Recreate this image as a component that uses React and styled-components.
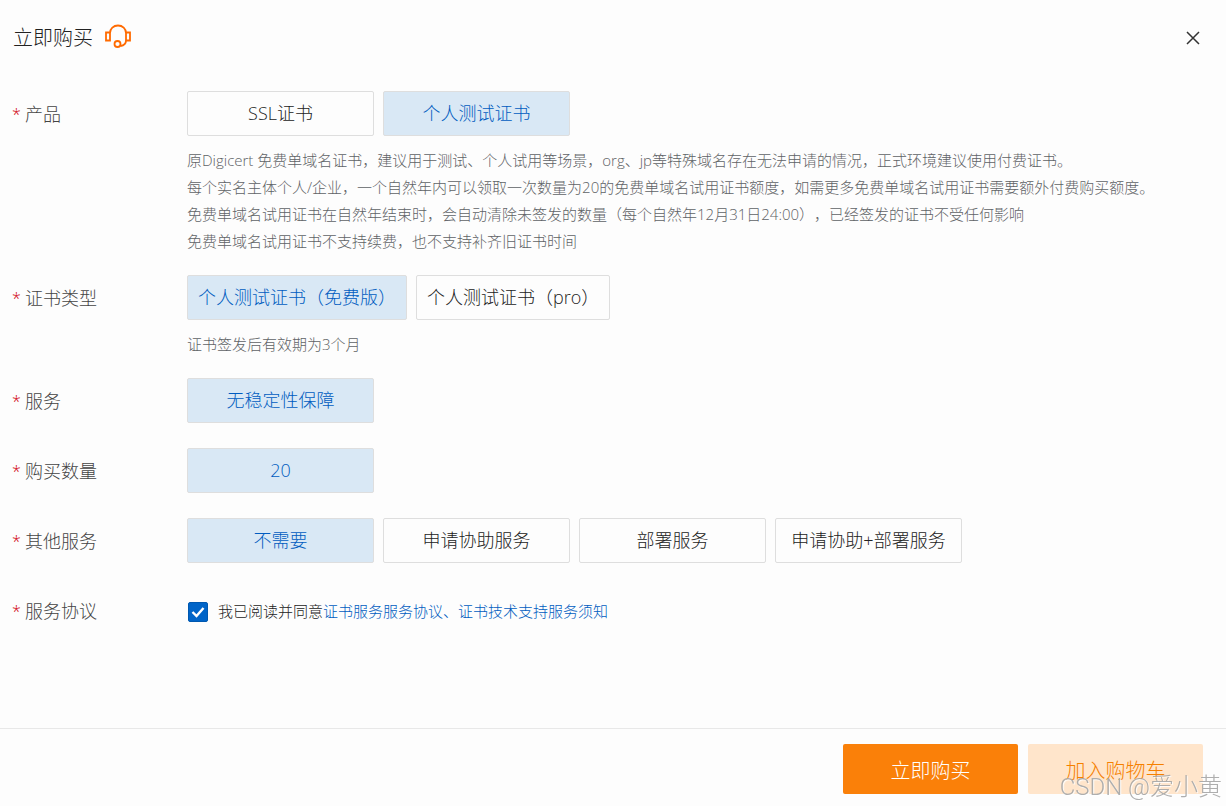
import { useState } from "react"
import styled, { createGlobalStyle } from "styled-components"

const groups = [
    {
        id: "produto",
        label: "产品",
        options: ["SSL证书", "个人测试证书"],
        initial: 1,
        notes: [
            "原Digicert 免费单域名证书，建议用于测试、个人试用等场景，org、jp等特殊域名存在无法申请的情况，正式环境建议使用付费证书。",
            "每个实名主体个人/企业，一个自然年内可以领取一次数量为20的免费单域名试用证书额度，如需更多免费单域名试用证书需要额外付费购买额度。",
            "免费单域名试用证书在自然年结束时，会自动清除未签发的数量（每个自然年12月31日24:00），已经签发的证书不受任何影响",
            "免费单域名试用证书不支持续费，也不支持补齐旧证书时间",
        ],
    },
    {
        id: "tipo",
        label: "证书类型",
        options: ["个人测试证书（免费版）", "个人测试证书（pro）"],
        initial: 0,
        notes: ["证书签发后有效期为3个月"],
    },
    { id: "servico", label: "服务", options: ["无稳定性保障"], initial: 0 },
    { id: "quantidade", label: "购买数量", options: ["20"], initial: 0 },
    {
        id: "outros",
        label: "其他服务",
        options: ["不需要", "申请协助服务", "部署服务", "申请协助+部署服务"],
        initial: 0,
    },
]

const OptionGroup = ({ id, label, options, initial, notes }) => {

    const [selected, setSelected] = useState(initial)

    return (

        <Row>

            <Label id={id}><Star>*</Star>{label}</Label>

            <Content>

                <Options role="group" aria-labelledby={id}>

                    {options.map((option, i) => (
                        <Option
                            key={option}
                            type="button"
                            $active={i === selected}
                            aria-pressed={i === selected}
                            onClick={() => setSelected(i)}
                        >
                            {option}
                        </Option>
                    ))}

                </Options>

                {notes && (
                    <Notes>
                        {notes.map((note) => <Note key={note}>{note}</Note>)}
                    </Notes>
                )}

            </Content>

        </Row>

    )

}

const App = () => {

    const [agreed, setAgreed] = useState(true)

    return (

        <Page>

            <GlobalStyle />

            <Header>

                <Title>立即购买</Title>

                <Headset viewBox="0 0 28 28" aria-hidden="true">
                    <path d="M6 9C6 4.500 9.500 1.500 14 1.500S22 4.500 22 9" />
                    <path d="M6 8.500H2V16.500H6ZM22 8.500H26V16.500H22Z" />
                    <path d="M22 16.500C22 19.500 20 21.500 16.500 22" />
                    <circle cx="13.500" cy="20" r="3" />
                </Headset>

                <Close type="button" aria-label="关闭">
                    <svg width="14" height="14" viewBox="0 0 14 14">
                        <path d="M1 1L13 13M13 1L1 13" stroke="#333" strokeWidth="1.500" />
                    </svg>
                </Close>

            </Header>

            <Form>

                {groups.map((group) => <OptionGroup key={group.id} {...group} />)}

                <Row>

                    <Label as="label" htmlFor="acordo"><Star>*</Star>服务协议</Label>

                    <Agreement>

                        <CheckWrap>
                            <Check
                                id="acordo"
                                type="checkbox"
                                checked={agreed}
                                onChange={(e) => setAgreed(e.target.checked)}
                            />
                            <Tick viewBox="0 0 20 20" aria-hidden="true">
                                <path d="M4.500 10L8.500 14L15.500 6" />
                            </Tick>
                        </CheckWrap>

                        <p>我已阅读并同意<A href="#">证书服务服务协议</A><A href="#">、证书技术支持服务须知</A></p>

                    </Agreement>

                </Row>

            </Form>

            <Footer>

                <Action type="button">立即购买</Action>

                <Action type="button" $light>加入购物车</Action>

            </Footer>

            <Watermark>CSDN @爱小黄</Watermark>

        </Page>

    )

}

const GlobalStyle = createGlobalStyle`
    * {
        box-sizing: border-box;
        margin: 0;
        padding: 0;
    }

    body {
        background: #fdfdfd;
        color: #222;
        font-family: "Open Sans", "Noto Sans CJK SC", sans-serif;
        font-weight: 300;
        text-spacing-trim: space-all;
    }

    button, input {
        font: inherit;
        cursor: pointer;
    }
`

const Page = styled.main`
    min-height: 100vh;
    display: flex;
    flex-direction: column;
`

const Header = styled.header`
    height: 75px;
    display: flex;
    align-items: center;
    gap: 11px;
    padding: 0 24px 0 13px;
`

const Title = styled.h1`
    font-size: 20px;
    font-weight: 300;
    line-height: 30px;
`

const Headset = styled.svg`
    width: 28px;
    height: 28px;
    fill: none;
    stroke: #ff6a00;
    stroke-width: 1.8;
`

const Close = styled.button`
    width: 18px;
    height: 18px;
    margin-left: auto;
    display: flex;
    align-items: center;
    justify-content: center;
    border: none;
    background: transparent;
`

const Form = styled.form`
    flex: 1;
    display: flex;
    flex-direction: column;
    gap: 24px;
    padding: 16px 24px 40px 12px;
`

const Row = styled.div`
    display: flex;
    align-items: flex-start;
`

const Label = styled.div`
    width: 175px;
    flex-shrink: 0;
    display: flex;
    padding-top: 1px;
    color: #444;
    font-size: 18px;
    line-height: 45px;
`

const Star = styled.span`
    width: 13px;
    color: #d0000c;
    font-size: 16px;
`

const Content = styled.div`
    flex: 1;
    min-width: 0;
`

const Options = styled.div`
    display: flex;
    flex-wrap: wrap;
    gap: 9px;
`

const Option = styled.button`
    min-width: 187px;
    height: 45px;
    padding: 0 10px;
    border: 1px solid #dedede;
    border-radius: 2px;
    background: ${({ $active }) => ($active ? "#d9e8f5" : "transparent")};
    color: ${({ $active }) => ($active ? "#005cc0" : "#222")};
    font-size: 18px;
    line-height: 27px;
`

const Notes = styled.div`
    margin: 11px 0 -4px;
`

const Note = styled.p`
    color: #5f6366;
    font-size: 15px;
    line-height: 27px;
`

const Agreement = styled.div`
    min-height: 46px;
    display: flex;
    align-items: center;
    gap: 10px;
    padding-top: 1px;
    font-size: 15px;
    line-height: 27px;
`

const CheckWrap = styled.span`
    position: relative;
    width: 20px;
    height: 20px;
    margin-left: 1px;
`

const Check = styled.input`
    display: block;
    width: 20px;
    height: 20px;
    appearance: none;
    border: 1px solid #0058b0;
    border-radius: 2px;

    &:checked {
        background: #0064c8;
    }
`

const Tick = styled.svg`
    position: absolute;
    inset: 0;
    pointer-events: none;
    fill: none;
    stroke: #fff;
    stroke-width: 2.4;
`

const A = styled.a`
    color: #005cc0;
    text-decoration: none;
`

const Footer = styled.footer`
    display: flex;
    justify-content: flex-end;
    gap: 10px;
    padding: 15px 23px 12px;
    border-top: 1px solid #e8e8e8;
`

const Action = styled.button`
    width: 175px;
    height: 50px;
    padding-top: 4px;
    border: none;
    border-radius: 2px;
    background: ${({ $light }) => ($light ? "#ffe5cb" : "#fa8009")};
    color: ${({ $light }) => ($light ? "#f58000" : "#fff")};
    font-size: 20px;
    line-height: 30px;
`

const Watermark = styled.div`
    position: fixed;
    right: 4px;
    bottom: 1px;
    color: rgba(165, 165, 165, 0.9);
    font-family: Roboto, "Noto Sans CJK SC", sans-serif;
    font-size: 24px;
    line-height: 36px;
    text-shadow: 1px 1px 1px #fff;
    pointer-events: none;
`

export default App
